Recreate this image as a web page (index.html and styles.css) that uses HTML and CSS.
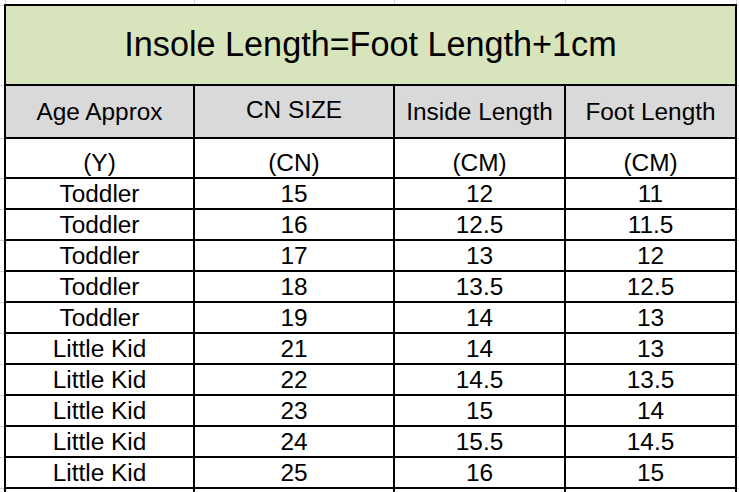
FILE: index.html
```html
<!DOCTYPE html>
<html>
<head>
<meta charset="utf-8">
<link rel="stylesheet" href="styles.css">
</head>
<body>
<table class="sheet">
  <colgroup>
    <col class="c-edge-l">
    <col class="c-age">
    <col class="c-cn">
    <col class="c-in">
    <col class="c-ft">
    <col class="c-edge-r">
  </colgroup>
  <tr class="r-top">
    <td class="edge edge-l"></td>
    <td class="gtop"></td><td class="gtop"></td><td class="gtop"></td><td class="gtop"></td>
    <td class="edge edge-r"></td>
  </tr>
  <tr class="r-title">
    <td class="edge edge-l"></td>
    <td class="cell title" colspan="4">Insole Length=Foot Length+1cm</td>
    <td class="edge edge-r"></td>
  </tr>
  <tr class="r-head">
    <td class="edge edge-l"></td>
    <td class="cell head">Age Approx</td>
    <td class="cell head head-up">CN SIZE</td>
    <td class="cell head">Inside Length</td>
    <td class="cell head">Foot Length</td>
    <td class="edge edge-r"></td>
  </tr>
  <tr class="r-unit">
    <td class="edge edge-l"></td>
    <td class="cell unit">(Y)</td>
    <td class="cell unit">(CN)</td>
    <td class="cell unit">(CM)</td>
    <td class="cell unit">(CM)</td>
    <td class="edge edge-r"></td>
  </tr>
  <tr class="r-data"><td class="edge edge-l"></td><td class="cell">Toddler</td><td class="cell">15</td><td class="cell">12</td><td class="cell">11</td><td class="edge edge-r"></td></tr>
  <tr class="r-data"><td class="edge edge-l"></td><td class="cell">Toddler</td><td class="cell">16</td><td class="cell">12.5</td><td class="cell">11.5</td><td class="edge edge-r"></td></tr>
  <tr class="r-data"><td class="edge edge-l"></td><td class="cell">Toddler</td><td class="cell">17</td><td class="cell">13</td><td class="cell">12</td><td class="edge edge-r"></td></tr>
  <tr class="r-data"><td class="edge edge-l"></td><td class="cell">Toddler</td><td class="cell">18</td><td class="cell">13.5</td><td class="cell">12.5</td><td class="edge edge-r"></td></tr>
  <tr class="r-data"><td class="edge edge-l"></td><td class="cell">Toddler</td><td class="cell">19</td><td class="cell">14</td><td class="cell">13</td><td class="edge edge-r"></td></tr>
  <tr class="r-data"><td class="edge edge-l"></td><td class="cell">Little Kid</td><td class="cell">21</td><td class="cell">14</td><td class="cell">13</td><td class="edge edge-r"></td></tr>
  <tr class="r-data"><td class="edge edge-l"></td><td class="cell">Little Kid</td><td class="cell">22</td><td class="cell">14.5</td><td class="cell">13.5</td><td class="edge edge-r"></td></tr>
  <tr class="r-data"><td class="edge edge-l"></td><td class="cell">Little Kid</td><td class="cell">23</td><td class="cell">15</td><td class="cell">14</td><td class="edge edge-r"></td></tr>
  <tr class="r-data"><td class="edge edge-l"></td><td class="cell">Little Kid</td><td class="cell">24</td><td class="cell">15.5</td><td class="cell">14.5</td><td class="edge edge-r"></td></tr>
  <tr class="r-data"><td class="edge edge-l"></td><td class="cell">Little Kid</td><td class="cell">25</td><td class="cell">16</td><td class="cell">15</td><td class="edge edge-r"></td></tr>
  <tr class="r-data"><td class="edge edge-l"></td><td class="cell"></td><td class="cell"></td><td class="cell"></td><td class="cell"></td><td class="edge edge-r"></td></tr>
</table>
</body>
</html>
```

FILE: styles.css
```css
html, body {
  margin: 0;
  padding: 0;
  background: #ffffff;
  overflow: hidden;
  height: 492px;
}

.sheet {
  border-collapse: collapse;
  table-layout: fixed;
  width: 739px;
  font-family: "Liberation Sans", Arial, sans-serif;
  color: #000000;
}

.c-edge-l { width: 5px; }
.c-age { width: 189px; }
.c-cn { width: 200px; }
.c-in { width: 171px; }
.c-ft { width: 171px; }
.c-edge-r { width: 3px; }

td {
  padding: 0;
  text-align: center;
  font-size: 24.4px;
  line-height: 27px;
  white-space: nowrap;
  overflow: hidden;
}

.cell {
  border: 2px solid #000000;
  vertical-align: bottom;
  padding-bottom: 1px;
}

.edge {
  border-top: 1px solid #d6d6d6;
  border-bottom: 1px solid #d6d6d6;
}
.edge-l { border-left: none; }
.edge-r { border-right: none; }

.gtop {
  border-left: 1px solid #d6d6d6;
  border-right: 1px solid #d6d6d6;
  border-top: none;
}

.r-top td { border-top: none; }

.r-top { height: 5px; }
.r-title { height: 80px; }
.r-head { height: 53px; }
.r-unit { height: 40px; }
.r-data { height: 31px; }

.title {
  background: #d8e4bc;
  font-size: 34.2px;
  line-height: 40px;
  vertical-align: middle;
  padding-bottom: 2px;
}

.head {
  background: #d9d9d9;
  vertical-align: middle;
  padding-bottom: 0;
}

.head-up {
  padding-bottom: 5px;
}

.unit {
  vertical-align: bottom;
  padding-bottom: 1px;
}
```
